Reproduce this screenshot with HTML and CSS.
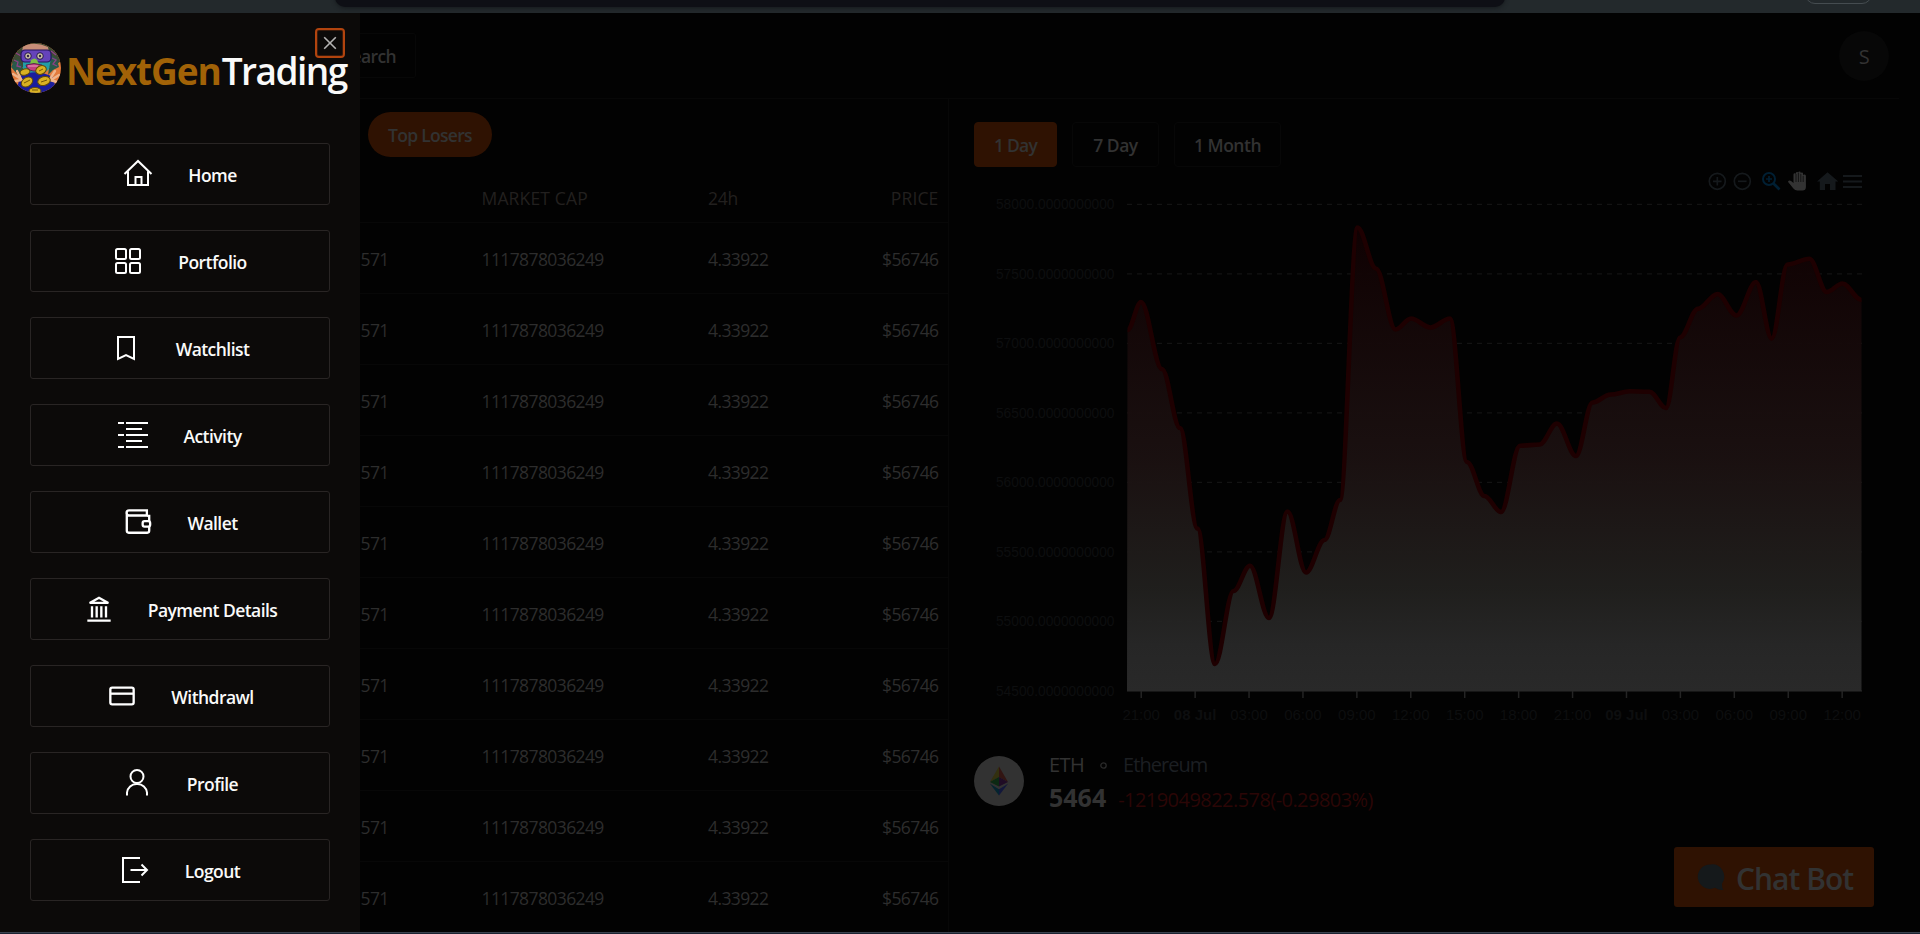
FILE: index.html
```html
<!DOCTYPE html>
<html lang="en">
<head>
<meta charset="utf-8">
<title>NextGen Trading</title>
<link rel="stylesheet" href="styles.css">
</head>
<body>
<div class="browser-bar"><div class="address"></div><div class="pill"></div></div>
<div class="app">
  <aside class="sidebar">
    <button class="close" aria-label="Close"><svg width="14" height="14" viewBox="0 0 14 14"><path d="M1.2 1.2l11.6 11.6M12.8 1.2L1.2 12.8"/></svg></button>
    <div class="brand">
      <svg class="logo" width="50" height="50" viewBox="0 0 50 50">
        <defs><clipPath id="lc"><circle cx="25" cy="25" r="25"/></clipPath></defs>
        <g clip-path="url(#lc)">
          <rect width="50" height="50" fill="#e27a3c"/>
          <path d="M0 0h50v18l-8 6H8L0 20z" fill="#3c4a34"/>
          <path d="M2 20l5-4 5 9 3 8-8-1-7-8zM40 12l6 4 2 8-6 3-5 5z" fill="#28594a"/>
          <path d="M3 17l4 2-1 4 4 1M41 15l4 2-3 4 4 2M5 10l5 3M40 8l5 4" stroke="#8e3f86" stroke-width="1.3" fill="none"/>
          <path d="M12 3q12-5 25 1l1 5H11z" fill="#c88e78"/>
          <path d="M12 15h28l-2 11-9 8H20l-8-8z" fill="#239da5"/>
          <path d="M9 33q16-8 33 1l4 16H5z" fill="#1a1d9c"/>
          <rect x="10" y="7" width="30" height="12" rx="4" fill="#6543bb" stroke="#25145c" stroke-width="1.2"/>
          <circle cx="17" cy="13" r="3.3" fill="#c8bfa2" stroke="#24154f"/><circle cx="29" cy="13" r="3.3" fill="#c8bfa2" stroke="#24154f"/>
          <circle cx="17" cy="13" r="1.2" fill="#312049"/><circle cx="29" cy="13" r="1.2" fill="#312049"/>
          <path d="M20 17q4-3 6 0l2 4h-9z" fill="#7fbf44"/>
          <path d="M15 22q8-3 16 0-1 7-9 6-6-1-7-6z" fill="#c2407f" stroke="#411842" stroke-width=".8"/>
          <path d="M17 23h10" stroke="#eba3bb"/>
          <path d="M2 31l8 5M4 38l7-1M6 28l4 8M48 32l-8 5M46 39l-7-2M44 28l-5 8" stroke="#efb48b" stroke-width="2.4" stroke-linecap="round"/>
          <g fill="#d9b122" stroke="#624a08" stroke-width="1">
            <ellipse cx="14" cy="29" rx="5" ry="3" transform="rotate(-15 14 29)"/>
            <ellipse cx="30" cy="27" rx="5.5" ry="4.2" transform="rotate(-25 30 27)"/>
            <ellipse cx="16" cy="39" rx="6.2" ry="4.5" transform="rotate(-35 16 39)"/>
            <ellipse cx="33" cy="38" rx="6.4" ry="4.4" transform="rotate(-15 33 38)"/>
            <ellipse cx="24" cy="48" rx="6" ry="3.5"/>
          </g>
          <path d="M13 40l6-3M30 39l6-2M28 28l4-2M21 47h6" stroke="#735508"/>
        </g>
      </svg>
      <div class="wordmark"><span class="gold">NextGen</span><span class="white">Trading</span></div>
    </div>
    <nav class="menu">
      <a class="item"><svg viewBox="0 0 30 30"><path d="M1.5 15L15 2l13.500 13M5 12.500V26h20V12.500M12.500 26v-8h6v8"/></svg><span>Home</span></a>
      <a class="item"><svg viewBox="0 0 30 30"><rect x="3" y="3" width="10" height="10" rx="1.500"/><rect x="17" y="3" width="10" height="10" rx="1.500"/><rect x="3" y="17" width="10" height="10" rx="1.500"/><rect x="17" y="17" width="10" height="10" rx="1.500"/></svg><span>Portfolio</span></a>
      <a class="item"><svg viewBox="0 0 30 30"><path d="M7 4h16v22l-8-4-8 4z"/></svg><span>Watchlist</span></a>
      <a class="item"><svg viewBox="0 0 30 30"><path d="M0 3h6M8 3h22M8 9h16M0 15h6M8 15h22M8 21h16M0 27h6M8 27h22"/></svg><span>Activity</span></a>
      <a class="item"><svg viewBox="0 0 30 30" class="bold"><path d="M25 8H5.500a2.500 2.500 0 0 1 0-5.500H24.500V8M3 5v19.500a2 2 0 0 0 2 2h20a2 2 0 0 0 2-2V20M27 14V8.500H25"/><rect x="20" y="14" width="8" height="6" rx="2"/></svg><span>Wallet</span></a>
      <a class="item"><svg viewBox="0 0 30 30" class="bold"><path d="M5 8.500L15 3l10 5.500zM2.500 27.500h25"/><path d="M7.500 12v12M12.500 12v12M17.500 12v12M22.500 12v12"/></svg><span>Payment Details</span></a>
      <a class="item"><svg viewBox="0 0 30 30" class="bold"><rect x="2.500" y="6" width="25" height="18" rx="2"/><path d="M2.500 12.500h25"/></svg><span>Withdrawl</span></a>
      <a class="item"><svg viewBox="0 0 30 30"><circle cx="15" cy="8.500" r="6.500"/><path d="M5 27.500v-3a9.500 9.500 0 0 1 9.500-8.500h1a9.500 9.500 0 0 1 9.500 8.500v3"/></svg><span>Profile</span></a>
      <a class="item"><svg viewBox="0 0 30 30"><path d="M20 3H3v24h17M10.500 15H27M21.500 9.500L27 15l-5.500 5.500"/></svg><span>Logout</span></a>
    </nav>
  </aside>
  <div class="main">
    <header class="topnav"><button class="search">Search</button><div class="avatar">S</div></header>
    <div class="content">
      <section class="coins">
        <div class="filters"><button class="chip">Top Losers</button></div>
        <div class="row head"><span></span><span>MARKET CAP</span><span class="h24">24h</span><span>PRICE</span></div>
        <div class="row"><span>571</span><span>1117878036249</span><span>4.33922</span><span>$56746</span></div>
        <div class="row"><span>571</span><span>1117878036249</span><span>4.33922</span><span>$56746</span></div>
        <div class="row"><span>571</span><span>1117878036249</span><span>4.33922</span><span>$56746</span></div>
        <div class="row"><span>571</span><span>1117878036249</span><span>4.33922</span><span>$56746</span></div>
        <div class="row"><span>571</span><span>1117878036249</span><span>4.33922</span><span>$56746</span></div>
        <div class="row"><span>571</span><span>1117878036249</span><span>4.33922</span><span>$56746</span></div>
        <div class="row"><span>571</span><span>1117878036249</span><span>4.33922</span><span>$56746</span></div>
        <div class="row"><span>571</span><span>1117878036249</span><span>4.33922</span><span>$56746</span></div>
        <div class="row"><span>571</span><span>1117878036249</span><span>4.33922</span><span>$56746</span></div>
        <div class="row"><span>571</span><span>1117878036249</span><span>4.33922</span><span>$56746</span></div>
      </section>
      <section class="detail">
        <div class="ranges"><button class="range active">1 Day</button><button class="range week">7 Day</button><button class="range month">1 Month</button></div>
        <svg class="chart" id="chart" width="900" height="564" viewBox="974 167 900 564">
          <defs><linearGradient id="area" gradientUnits="userSpaceOnUse" x1="0" y1="227" x2="0" y2="691"><stop offset="0" stop-color="#100102"/><stop offset=".5" stop-color="#1b1111"/><stop offset=".78" stop-color="#21201e"/><stop offset=".9" stop-color="#282828"/><stop offset="1" stop-color="#2b2b2b"/></linearGradient></defs>
          <g class="toolbar" fill="none" stroke="#15191c" stroke-width="1.700">
            <circle cx="1717.300" cy="181.300" r="8"/><path d="M1713 181.300h8.600M1717.300 177v8.600"/>
            <circle cx="1742.300" cy="181.300" r="8"/><path d="M1738 181.300h8.600"/>
            <g stroke="#001f33"><circle cx="1769" cy="179" r="6" stroke-width="2"/><path d="M1773.500 183.500l6 6" stroke-width="2.700"/><path d="M1766 179h6M1769 176v6"/></g>
            <path stroke="none" fill="#333" d="M1793.500 174.500a1.200 1.200 0 0 1 2.400 0v-1.200a1.200 1.200 0 0 1 2.400 0v-.700a1.200 1.200 0 0 1 2.400 0v1.200a1.200 1.200 0 0 1 2.400 0v2a1.200 1.200 0 0 1 2.800.400V187q0 3.500-3.500 3.500h-5q-2.500 0-4-2l-5.500-6.800q1.300-2 3.200-.700l2.400 2z"/>
            <path d="M1796 174v8M1798.400 173v9M1800.800 174v8M1803.200 176v6" stroke="#0d0d0d" stroke-width=".8"/>
            <path stroke="none" fill="#15191c" d="M1825 190v-6h5v6h5.500v-8.500h2.800L1827.500 172.300 1817 181.500h2.800v8.500z"/>
            <path d="M1843 176h19M1843 181.500h19M1843 187h19" stroke-width="2"/>
          </g>
        </svg>
        <div class="asset">
          <svg width="50" height="50" viewBox="0 0 50 50"><circle cx="25" cy="25" r="25" fill="#323232"/><path d="M25 10.500L16 26l9-5z" fill="#33300f"/><path d="M25 10.500L34 26l-9-5z" fill="#321512"/><path d="M16 26l9-5v9.500z" fill="#0c2913"/><path d="M34 26l-9-5v9.500z" fill="#1f0c25"/><path d="M16 27.800l9 5.400V39.500z" fill="#04242f"/><path d="M34 27.800l-9 5.400V39.500z" fill="#12173a"/></svg>
          <div class="asset-text">
            <div class="names"><span>ETH</span><svg width="7" height="7" viewBox="0 0 7 7"><circle cx="3.500" cy="3.500" r="2.700" fill="none" stroke="#2a2a2a" stroke-width="1.300"/></svg><span class="muted">Ethereum</span></div>
            <div class="quote"><strong>5464</strong><span>-1219049822.578(-0.29803%)</span></div>
          </div>
        </div>
      </section>
    </div>
    <button class="chat"><svg width="28" height="28" viewBox="0 0 28 28"><path d="M13.500 1.500a12.200 12.200 0 1 0 4.500 23.300q3.500 2.400 8.300 2.200-1.600-3-1.200-6.500a12.200 12.200 0 0 0-11.600-19z" fill="#15191b"/></svg><span>Chat Bot</span></button>
  </div>
</div>
<div class="taskbar"></div>
<script src="chart.js"></script>
</body>
</html>
```
FILE: styles.css
```css
* { box-sizing: border-box; }
body { margin: 0; width: 1920px; height: 934px; overflow: hidden; display: flex; flex-direction: column; background: #020202; color: #323232; font-family: "Open Sans", sans-serif; font-size: 17.5px; letter-spacing: -0.6px; }
button { font: inherit; letter-spacing: inherit; color: inherit; background: none; border: 0; padding: 0; margin: 0; }
.browser-bar { height: 13px; flex: none; position: relative; background: #23292c; overflow: hidden; }
.address { position: absolute; left: 335px; top: -20px; width: 1170px; height: 27px; border-radius: 10px; background: #0e0f15; box-shadow: 0 1px 4px #15191c; }
.pill { position: absolute; left: 1805px; top: -22px; width: 67px; height: 26px; border-radius: 10px; border: 1px solid #454c50; }
.app { flex: 1; min-height: 0; display: flex; }
.taskbar { height: 2px; flex: none; background: #1b2432; border-top: 1px solid #3b424e; }

.sidebar { width: 360px; flex: none; position: relative; background: #0c0a09; padding: 30px 30px 0; }
.close { position: absolute; left: 315px; top: 15px; width: 30px; height: 30px; border: 2.5px solid #b2440e; border-radius: 4px; display: flex; align-items: center; justify-content: center; box-shadow: inset 0 0 0 1px #3a1a0b; }
.close svg { fill: none; stroke: #b5b4b3; stroke-width: 1.6; }
.brand { display: flex; align-items: center; margin: 0 -30px 0 -19px; height: 50px; gap: 5px; }
.logo { flex: none; }
.wordmark { display: flex; font-size: 37px; line-height: 50px; padding-top: 5px; }
.gold { font-weight: 700; color: #a16207; letter-spacing: -1.1px; }
.white { font-weight: 600; color: #fafaf9; letter-spacing: -1.5px; margin-left: 1px; }
.menu { display: flex; flex-direction: column; gap: 25px; margin-top: 50px; }
.item { height: 62px; border: 1px solid #292524; border-radius: 3px; display: flex; align-items: center; justify-content: center; gap: 35px; color: #fafaf9; font-weight: 600; letter-spacing: -0.55px; }
.item svg { width: 30px; height: 30px; flex: none; fill: none; stroke: #fff; stroke-width: 2; }
.item svg.bold { stroke-width: 2.5; width: 28px; height: 28px; margin: 0 0 0 2px; }
.item span { padding-top: 2px; }

.main { flex: 1; min-width: 0; position: relative; display: flex; flex-direction: column; overflow: hidden; }
.topnav { height: 86px; flex: none; margin-right: 21px; border-bottom: 1px solid #070707; display: flex; align-items: center; justify-content: space-between; padding-right: 10px; }
.search { width: 56px; height: 45px; border: 1px solid #070707; border-left: 0; border-radius: 0 3px 3px 0; display: flex; align-items: center; justify-content: flex-end; padding-right: 19px; font-weight: 600; overflow: hidden; }
.avatar { width: 50px; height: 50px; border-radius: 50%; background: #070707; display: flex; align-items: center; justify-content: center; font-size: 20px; padding-top: 2px; }
.content { flex: 1; min-height: 0; display: flex; }
.coins { width: 589px; flex: none; border-right: 1px solid #070707; overflow: hidden; }
.filters { padding: 13px 0 0 8px; height: 75px; }
.chip { width: 124px; height: 45px; border-radius: 23px; background: #2f1202; font-weight: 600; letter-spacing: -0.7px; padding-top: 1px; }
.row { height: 71px; display: grid; grid-template-columns: 121px 226.5px 1fr auto; align-items: center; padding: 1px 9.5px 0 0.5px; border-bottom: 1px solid #070707; color: #2d2d2d; }
.row.head { height: 49px; padding-top: 0; font-weight: 500; color: #22201f; letter-spacing: 0.15px; }
.row .h24 { letter-spacing: -0.3px; }

.detail { flex: 1; min-width: 0; padding: 23px 0 0 25px; }
.ranges { display: flex; gap: 15px; }
.range { height: 45px; width: 83px; padding-top: 1px; border: 1px solid #070707; border-radius: 4px; font-weight: 600; letter-spacing: -0.5px; }
.range.week { width: 87px; }
.range.month { width: 107px; }
.range.active { background: #2f1202; border-color: #2f1202; letter-spacing: -0.8px; }
.chart { display: block; font-family: "Liberation Sans", sans-serif; letter-spacing: 0; }
.chart text { fill: #0d0e0f; }
.chart .ylab { font-size: 13.75px; text-anchor: end; }
.chart .xlab { font-size: 15px; text-anchor: middle; }
.chart .day { font-weight: 700; }
.asset { display: flex; align-items: flex-start; gap: 25px; margin-top: 25px; font-size: 20px; }
.asset-text { display: flex; flex-direction: column; }
.names { display: flex; align-items: center; line-height: 20px; margin-top: -1px; }
.names svg { margin: 0 16px 0 16px; }
.names .muted { color: #1c1f22; letter-spacing: -0.95px; }
.quote { display: flex; align-items: baseline; gap: 12px; line-height: 36px; margin-top: 4px; color: #2b0606; letter-spacing: -0.55px; }
.quote strong { font-size: 25px; color: #323232; letter-spacing: 0; }
.chat { position: absolute; left: 1314px; top: 834px; width: 200px; height: 60px; border-radius: 3px; background: #2f1202; display: flex; align-items: center; padding-left: 23px; gap: 11px; font-size: 30px; font-weight: 600; letter-spacing: -1px; }
.chat span { padding-top: 2px; }
```
FILE: chart.js
```js
const points = [[1127.5,330],[1141,302],[1162,369],[1180,428],[1197.5,528.5],[1215,664],[1233.5,591],[1250,565.7],[1269,618],[1287.5,511.5],[1306,572.5],[1324.5,540],[1340,500],[1357.5,227.5],[1376,268.5],[1395.5,329.5],[1411,318.5],[1430.5,327.5],[1450,318.5],[1467,462],[1484.5,496],[1501,512],[1520,445.7],[1539.5,444.5],[1557,423.5],[1576,456],[1592.5,402.5],[1610.5,394.5],[1629.5,391.3],[1649.5,391.7],[1666,408],[1680,337.5],[1698,308.7],[1717.5,294],[1736.5,315.5],[1756,282],[1771.7,338.5],[1787.5,264.5],[1809.5,258.7],[1826.7,292],[1842.5,283.5],[1861.5,300]];
const xLabels = ['21:00','08 Jul','03:00','06:00','09:00','12:00','15:00','18:00','21:00','09 Jul','03:00','06:00','09:00','12:00'];
const plotLeft = 1127, plotRight = 1862, plotBottom = 691, plotTop = 204.4, step = 69.5;

let line = `M${points[0]}`;
for (let i = 1; i < points.length; i++) {
  const [x0, y0] = points[i - 1], [x1, y1] = points[i];
  const k = (x1 - x0) * 0.35;
  line += `C${x0 + k},${y0} ${x1 - k},${y1} ${x1},${y1}`;
}

let out = '';
for (let i = 0; i < 8; i++) {
  const y = plotTop + i * step;
  if (i < 7) out += `<path d="M${plotLeft} ${y}H${plotRight}" stroke="#131313" stroke-dasharray="5 5" stroke-width="1.25"/>`;
  out += `<text class="ylab" x="1114.500" y="${y + 4.8}">${58000 - i * 500}.0000000000</text>`;
}
out += `<path d="${line}V${plotBottom}H${plotLeft}z" fill="url(#area)" fill-opacity=".95"/>`;
out += `<path d="${line}" fill="none" stroke="#1e0001" stroke-width="4.600"/>`;
out += `<path d="M${plotLeft} ${plotBottom}H${plotRight}" stroke="#2b2b2b"/>`;
xLabels.forEach((t, i) => {
  const x = 1141.2 + i * 53.92;
  out += `<path d="M${x} ${plotBottom}v7" stroke="#242424" stroke-width="1.500"/>`;
  out += `<text class="xlab${t.includes('Jul') ? ' day' : ''}" x="${x}" y="720">${t}</text>`;
});
document.getElementById('chart').insertAdjacentHTML('beforeend', out);
```
